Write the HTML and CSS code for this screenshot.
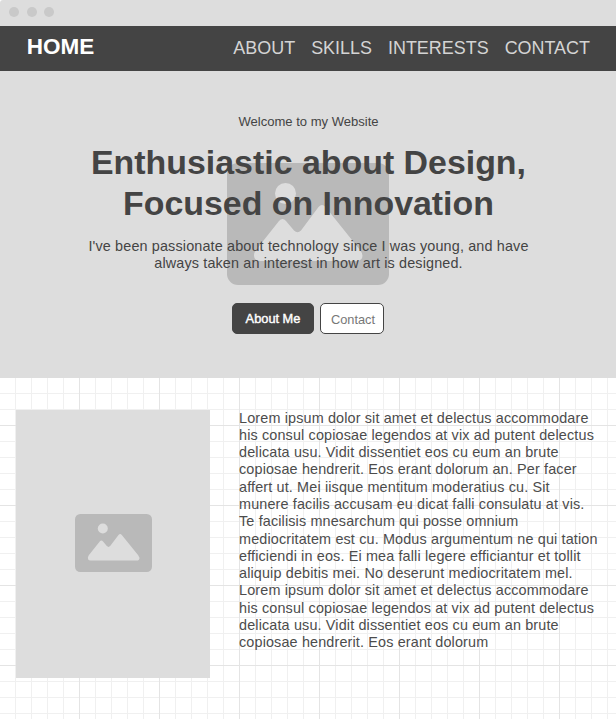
FILE: index.html
```html
<!DOCTYPE html>
<html lang="en">
<head>
<meta charset="utf-8">
<title>Home</title>
<link rel="stylesheet" href="styles.css">
</head>
<body>
<svg class="defs" width="0" height="0" aria-hidden="true">
  <symbol id="picture" viewBox="0 0 162 122">
    <rect width="162" height="122" rx="11" fill="#b9b9b9"/>
    <circle cx="58.5" cy="30.5" r="10.5" fill="#ddd"/>
    <path d="M52 58Q55.500 54 59 58L67 67.500Q70.500 71 74 67.500L91.500 44Q95 40 98.500 44L133 87Q137 92 134.500 96Q133 98 129 98H33Q29 98 27.500 95Q26 91 29 87Z" fill="#ddd"/>
  </symbol>
</svg>
<div class="window-bar"><i class="dot"></i><i class="dot"></i><i class="dot"></i></div>
<header class="nav">
  <strong class="brand">HOME</strong>
  <nav class="links"><a>ABOUT</a><a>SKILLS</a><a>INTERESTS</a><a>CONTACT</a></nav>
</header>
<section class="hero">
  <svg class="hero-picture"><use href="#picture"/></svg>
  <p class="welcome">Welcome to my Website</p>
  <h1 class="title">Enthusiastic about Design,<br>Focused on Innovation</h1>
  <p class="copy lead">I've been passionate about technology since I was young, and have<br>always taken an interest in how art is designed.</p>
  <div class="actions"><a class="button primary">About Me</a><a class="button secondary">Contact</a></div>
</section>
<main class="content">
  <div class="placeholder"><svg class="thumb"><use href="#picture"/></svg></div>
  <p class="copy body">Lorem ipsum dolor sit amet et delectus accommodare<br>his consul copiosae legendos at vix ad putent delectus<br>delicata usu. Vidit dissentiet eos cu eum an brute<br>copiosae hendrerit. Eos erant dolorum an. Per facer<br>affert ut. Mei iisque mentitum moderatius cu. Sit<br>munere facilis accusam eu dicat falli consulatu at vis.<br>Te facilisis mnesarchum qui posse omnium<br>mediocritatem est cu. Modus argumentum ne qui tation<br>efficiendi in eos. Ei mea falli legere efficiantur et tollit<br>aliquip debitis mei. No deserunt mediocritatem mel.<br>Lorem ipsum dolor sit amet et delectus accommodare<br>his consul copiosae legendos at vix ad putent delectus<br>delicata usu. Vidit dissentiet eos cu eum an brute<br>copiosae hendrerit. Eos erant dolorum</p>
</main>
</body>
</html>
```
FILE: styles.css
```css
* { box-sizing: border-box; }
body {
  margin: 0;
  height: 719px;
  overflow: hidden;
  display: flex;
  flex-direction: column;
  background: #fff;
  color: #444;
  font-family: "Liberation Sans", Arial, sans-serif;
}
p, h1 { margin: 0; }
.defs { position: absolute; }
.window-bar {
  flex: none;
  height: 26px;
  padding: 7px 9px;
  display: flex;
  gap: 7.5px;
  background: #ddd;
  border-top-left-radius: 3px;
}
.dot { width: 10px; height: 10px; border-radius: 50%; background: #c9c9c9; }
.nav {
  flex: none;
  height: 45px;
  padding: 0 26px;
  display: flex;
  justify-content: space-between;
  background: #444;
}
.brand { font-size: 22.5px; line-height: 26px; padding: 8px 0 0 0.7px; color: #fff; }
.links {
  display: flex;
  gap: 16px;
  padding-top: 12px;
  font-size: 17.95px;
  line-height: 20px;
  color: #d4d4d4;
}
.hero {
  flex: none;
  position: relative;
  height: 307px;
  padding: 43px 0 0 1px;
  display: flex;
  flex-direction: column;
  align-items: center;
  text-align: center;
  white-space: nowrap;
  background: #ddd;
}
.hero > * { position: relative; }
.hero > .hero-picture { position: absolute; left: 227px; top: 92px; width: 162px; height: 122px; }
.welcome { font-size: 13.05px; line-height: 16px; }
.title { margin-top: 12px; font-size: 33.9px; line-height: 41px; }
.copy { font-size: 14.4px; line-height: 17.28px; letter-spacing: 0.144px; }
.lead { margin-top: 14px; }
.actions { display: flex; gap: 6px; margin: 30.44px 1px 0 0; }
.button {
  height: 31px;
  border: 1px solid #444;
  border-radius: 5px;
  font-size: 12.8px;
  line-height: 29px;
}
.primary { width: 82px; background: #444; color: #fff; -webkit-text-stroke: 0.4px #fff; }
.secondary { width: 64px; padding: 1px 0 0 2px; background: #fff; color: #777; }
.content {
  flex: 1;
  display: flex;
  align-items: flex-start;
  gap: 29px;
  padding: 32px 0 0 16px;
  background-color: #fff;
  background-image:
    linear-gradient(to right, transparent 79px, #e4e4e4 79px),
    linear-gradient(to bottom, transparent 79px, #e4e4e4 79px),
    linear-gradient(to right, transparent 15px, #f0f0f0 15px),
    linear-gradient(to bottom, transparent 15px, #f0f0f0 15px);
  background-size: 80px 80px, 80px 80px, 16px 16px, 16px 16px;
  background-position: 0 0, 0 -32px, 0 0, 0 0;
}
.placeholder {
  flex: none;
  width: 194px;
  height: 268px;
  display: flex;
  align-items: center;
  justify-content: center;
  background: #ddd;
}
.thumb { width: 77px; height: 58px; margin: -2px 0 0 1px; }
.body { margin-top: -0.37px; white-space: nowrap; color: #4c4c4c; }
```
